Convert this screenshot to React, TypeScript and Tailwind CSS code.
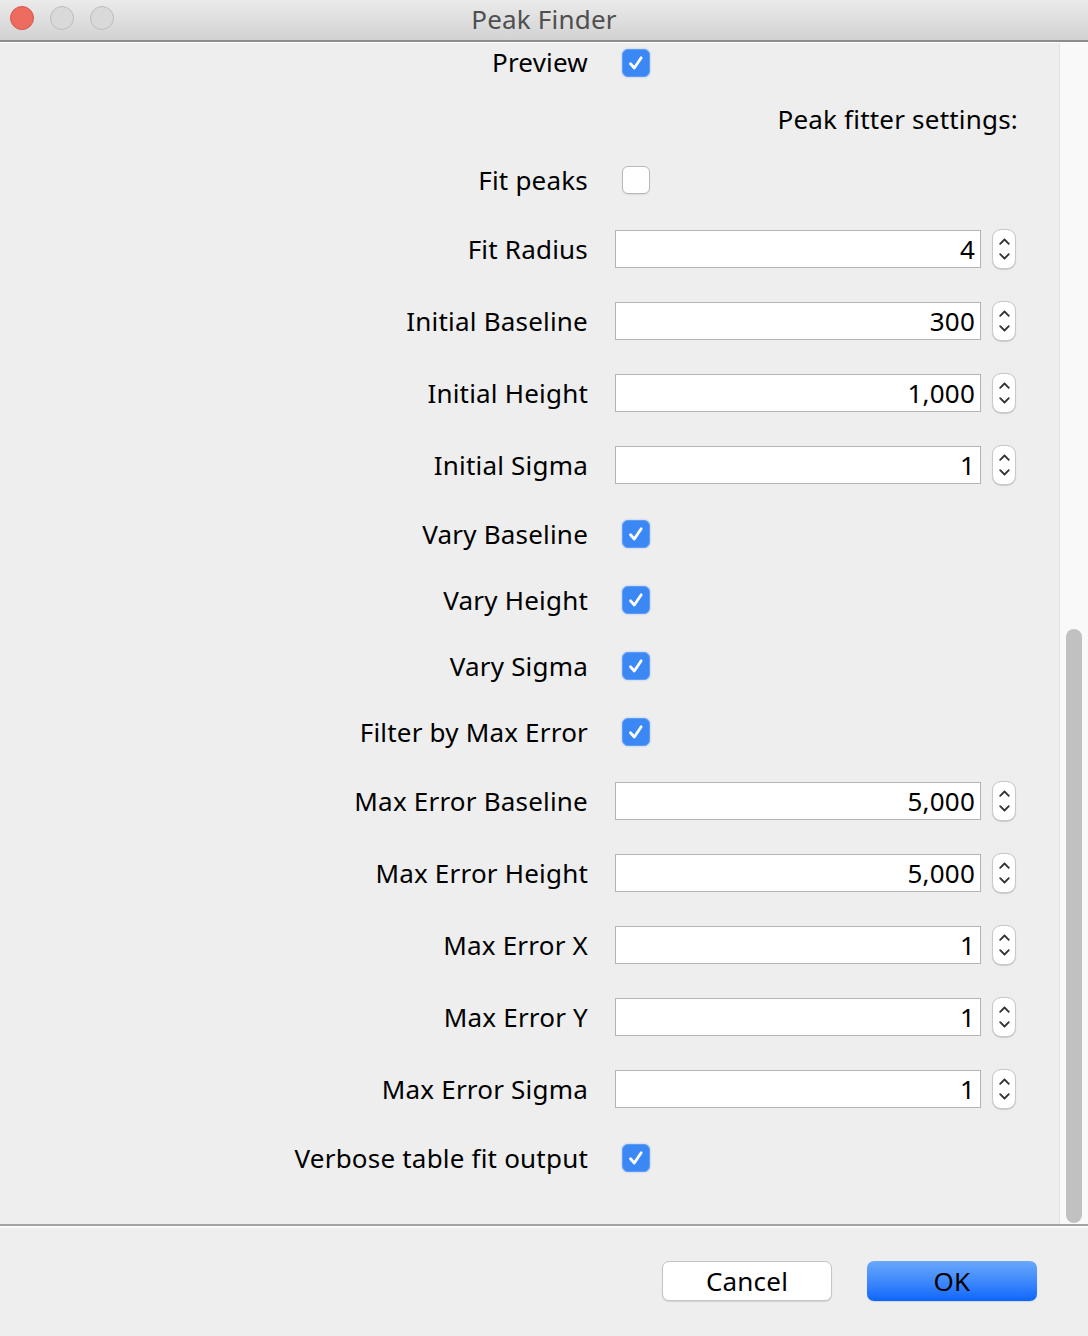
import React from "react";

type Row =
  | { kind: "check"; label: string; checked: boolean }
  | { kind: "spin"; label: string; value: string };

const rows: Row[] = [
  { kind: "check", label: "Fit peaks", checked: false },
  { kind: "spin", label: "Fit Radius", value: "4" },
  { kind: "spin", label: "Initial Baseline", value: "300" },
  { kind: "spin", label: "Initial Height", value: "1,000" },
  { kind: "spin", label: "Initial Sigma", value: "1" },
  { kind: "check", label: "Vary Baseline", checked: true },
  { kind: "check", label: "Vary Height", checked: true },
  { kind: "check", label: "Vary Sigma", checked: true },
  { kind: "check", label: "Filter by Max Error", checked: true },
  { kind: "spin", label: "Max Error Baseline", value: "5,000" },
  { kind: "spin", label: "Max Error Height", value: "5,000" },
  { kind: "spin", label: "Max Error X", value: "1" },
  { kind: "spin", label: "Max Error Y", value: "1" },
  { kind: "spin", label: "Max Error Sigma", value: "1" },
  { kind: "check", label: "Verbose table fit output", checked: true },
];

function Checkbox({ checked }: { checked: boolean }) {
  if (!checked) {
    return (
      <div className="w-[28px] h-[28px] rounded-[6px] bg-white border border-[#b9b9b9] shadow-[0_1px_1px_rgba(0,0,0,0.08)]" />
    );
  }
  return (
    <div className="w-[28px] h-[28px] rounded-[6px] bg-[#3b88f5] border border-[#5f9cf6] shadow-[0_0_2px_rgba(59,136,245,0.5)] flex items-center justify-center">
      <svg width="20" height="20" viewBox="0 0 20 20">
        <path d="M4.5 10.8 L8.3 15 L15.2 4.8" fill="none" stroke="white" strokeWidth="2.8" strokeLinecap="round" strokeLinejoin="round" />
      </svg>
    </div>
  );
}

function Spinner() {
  return (
    <div className="w-[24px] h-[40px] rounded-[9px] bg-white border border-[#c8c8c8] shadow-[0_1px_1px_rgba(0,0,0,0.15)] flex flex-col items-center justify-center gap-[8px]">
      <svg width="11" height="7" viewBox="0 0 11 7">
        <path d="M1.2 5.8 L5.5 1.5 L9.8 5.8" fill="none" stroke="#333" strokeWidth="1.8" strokeLinecap="round" strokeLinejoin="round" />
      </svg>
      <svg width="11" height="7" viewBox="0 0 11 7">
        <path d="M1.2 1.2 L5.5 5.5 L9.8 1.2" fill="none" stroke="#333" strokeWidth="1.8" strokeLinecap="round" strokeLinejoin="round" />
      </svg>
    </div>
  );
}

function Label({ text }: { text: string }) {
  return <div className="w-[588px] shrink-0 text-right text-black">{text}</div>;
}

export default function App() {
  return (
    <div
      className="w-[1088px] h-[1336px] bg-[#eeeeee] flex flex-col overflow-hidden text-[26px] tracking-[0.2px]"
      style={{ fontFamily: '"Noto Sans", "DejaVu Sans", sans-serif' }}
    >
      {/* title bar */}
      <div className="h-[42px] shrink-0 bg-gradient-to-b from-[#ebebeb] to-[#d2d2d2] border-b-[2px] border-[#8c8c8c] flex items-center relative">
        <div className="flex items-center gap-[16px] pl-[10px] -mt-[4px]">
          <div className="w-[24px] h-[24px] rounded-full bg-[#ee6b60] border border-[#d6554b]" />
          <div className="w-[24px] h-[24px] rounded-full bg-[#d9d9d9] border border-[#bdbdbd]" />
          <div className="w-[24px] h-[24px] rounded-full bg-[#d9d9d9] border border-[#bdbdbd]" />
        </div>
        <div className="absolute left-0 right-0 top-0 h-[38px] flex items-center justify-center text-[#4f4f4f] pointer-events-none">
          Peak Finder
        </div>
      </div>
      <div className="h-[1px] bg-white shrink-0" />

      {/* scroll area */}
      <div className="flex flex-1 min-h-0">
        <div className="flex-1 flex flex-col">
          <div className="h-[39px] flex items-center">
            <Label text="Preview" />
            <div className="ml-[34px]">
              <Checkbox checked={true} />
            </div>
          </div>
          <div className="h-[65px] pt-[10px] flex items-center justify-end pr-[41px]">
            Peak fitter settings:
          </div>
          {rows.map((r) =>
            r.kind === "check" ? (
              <div key={r.label} className="h-[66px] flex items-center">
                <Label text={r.label} />
                <div className="ml-[34px]">
                  <Checkbox checked={r.checked} />
                </div>
              </div>
            ) : (
              <div key={r.label} className="h-[72px] flex items-center">
                <Label text={r.label} />
                <div className="ml-[27px] w-[366px] h-[38px] bg-white border border-[#b3b3b3] flex items-center justify-end pr-[5px]">
                  {r.value}
                </div>
                <div className="ml-[11px]">
                  <Spinner />
                </div>
              </div>
            )
          )}
        </div>
        <div className="w-[29px] shrink-0 bg-[#f9f9f9] border-l border-[#e2e2e2] flex flex-col justify-end pb-[1px]">
          <div className="ml-[6px] w-[16px] h-[594px] rounded-full bg-[#c1c1c1]" />
        </div>
      </div>

      {/* footer */}
      <div className="h-[2px] bg-[#a3a3a3] shrink-0" />
      <div className="h-[2px] bg-[#fafafa] shrink-0" />
      <div className="h-[108px] shrink-0 flex items-start justify-end pt-[33px] pr-[51px] gap-[35px]">
        <button className="w-[170px] h-[40px] rounded-[7px] bg-white border border-[#c5c5c5] shadow-[0_1px_1px_rgba(0,0,0,0.12)] text-black">
          Cancel
        </button>
        <button className="w-[170px] h-[40px] rounded-[7px] bg-gradient-to-b from-[#6aa8fb] to-[#0866fd] text-black shadow-[0_1px_1px_rgba(0,0,0,0.1)]">
          OK
        </button>
      </div>
    </div>
  );
}
